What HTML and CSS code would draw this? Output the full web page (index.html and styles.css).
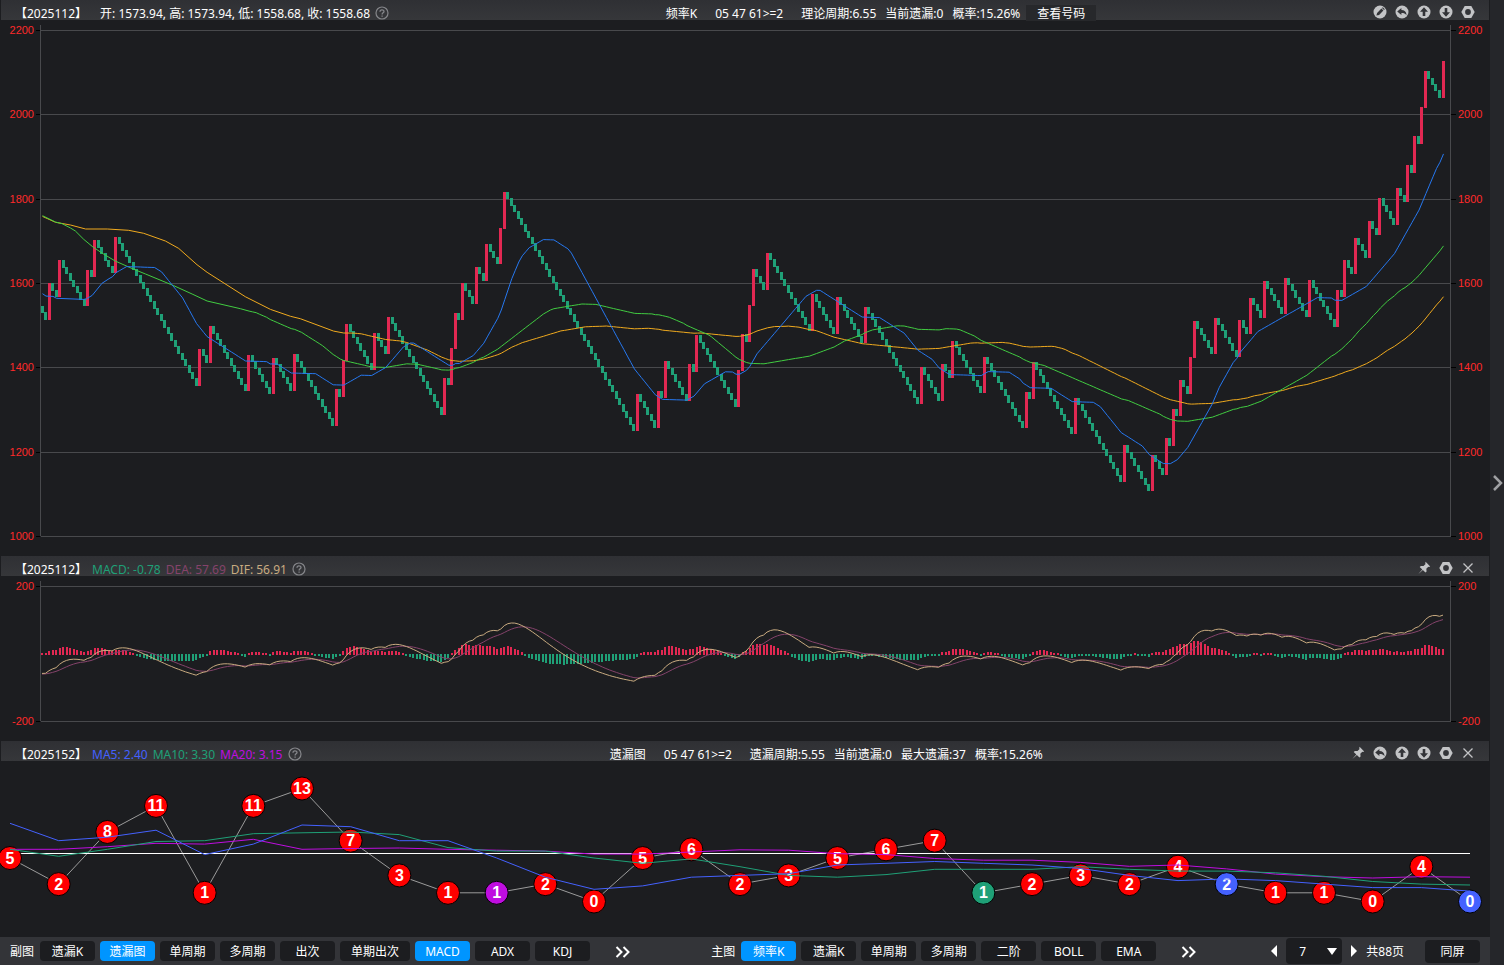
FILE: index.html
```html
<!DOCTYPE html>
<html lang="zh-CN">
<head>
  <meta charset="UTF-8">
  <title>频率K</title>
  <link rel="stylesheet" href="styles.css">
</head>
<body>

<svg class="defs" width="0" height="0">
  <symbol id="i-edit" viewBox="0 0 14 14">
    <circle cx="7" cy="7" r="6.5" fill="#c3c4c6"/>
    <path d="M3.4 10.6l.7-2.7 4.3-4.3 2 2-4.3 4.3zM9 3l.8-.7 2 2-.8.7z" fill="#333438"/>
  </symbol>
  <symbol id="i-back" viewBox="0 0 14 14">
    <circle cx="7" cy="7" r="6.5" fill="#c3c4c6"/>
    <path d="M2.2 6.5L6.4 3v2.1c3 0 4.9 1.7 5.2 5.1C10.4 8.6 8.9 8 6.4 8v2z" fill="#333438"/>
  </symbol>
  <symbol id="i-up" viewBox="0 0 14 14">
    <circle cx="7" cy="7" r="6.5" fill="#c3c4c6"/>
    <path d="M7 2.3L11 6.7H8.3V11H5.7V6.7H3z" fill="#333438"/>
  </symbol>
  <symbol id="i-down" viewBox="0 0 14 14">
    <circle cx="7" cy="7" r="6.5" fill="#c3c4c6"/>
    <path d="M7 11.7L11 7.3H8.3V3H5.7V7.3H3z" fill="#333438"/>
  </symbol>
  <symbol id="i-set" viewBox="0 0 14 14">
    <path d="M3.7 1h6.6L13.7 7l-3.4 6H3.7L.3 7z" fill="#c3c4c6"/>
    <circle cx="7" cy="7" r="2.9" fill="#333438"/>
  </symbol>
  <symbol id="i-pin" viewBox="0 0 14 14">
    <path d="M8.600.8l4.600 4.600-1.200.5-.7-.2-2 2.100.3 2.700-1.200 1.100-2.500-2.500-4.600 4 4-4.700L2.700 6l1.200-1.100 2.600.2 2.100-2-.4-.9z" fill="#c3c4c6"/>
  </symbol>
  <symbol id="i-close" viewBox="0 0 14 14">
    <path d="M2.500 2.500l9 9M11.500 2.500l-9 9" stroke="#c3c4c6" stroke-width="1.300" fill="none"/>
  </symbol>
  <symbol id="i-help" viewBox="0 0 14 14">
    <circle cx="7" cy="7" r="6" fill="none" stroke="#85868a" stroke-width="1.200"/>
    <path d="M5 5.700C5 3.200 9 3.300 9 5.500c0 1.300-1.900 1.400-1.900 2.900M7.100 9.500v1.300" fill="none" stroke="#85868a" stroke-width="1.300"/>
  </symbol>
  <symbol id="i-more" viewBox="0 0 16 12">
    <path d="M1.500 1L6.500 6l-5 5M8.500 1l5 5-5 5" fill="none" stroke="#fff" stroke-width="2"/>
  </symbol>
</svg>

<main class="content">
  <section class="panel panel-main">
    <header class="panel-head">
      <div class="info">
        <span class="issue issue-wide">【2025112】</span>
        <span>开: 1573.94, 高: 1573.94, 低: 1558.68, 收: 1558.68</span>
        <button class="icon help" aria-label="帮助"><svg><use href="#i-help"/></svg></button>
      </div>
      <div class="summary">
        <span class="wide">频率K</span>
        <span class="wide">05 47 61&gt;=2</span>
        <span>理论周期:6.55</span>
        <span>当前遗漏:0</span>
        <span>概率:15.26%</span>
        <button class="view-code">查看号码</button>
      </div>
      <div class="tools">
        <button class="icon" aria-label="编辑"><svg><use href="#i-edit"/></svg></button>
        <button class="icon" aria-label="返回"><svg><use href="#i-back"/></svg></button>
        <button class="icon" aria-label="上移"><svg><use href="#i-up"/></svg></button>
        <button class="icon" aria-label="下移"><svg><use href="#i-down"/></svg></button>
        <button class="icon" aria-label="设置"><svg><use href="#i-set"/></svg></button>
      </div>
    </header>
    <div class="chart"><svg id="kChart"></svg></div>
  </section>

  <section class="panel panel-macd">
    <header class="panel-head">
      <div class="info">
        <span class="issue">【2025112】</span>
        <span class="c-green">MACD: -0.78</span>
        <span class="c-plum">DEA: 57.69</span>
        <span class="c-sand">DIF: 56.91</span>
        <button class="icon help" aria-label="帮助"><svg><use href="#i-help"/></svg></button>
      </div>
      <div class="tools">
        <button class="icon" aria-label="固定"><svg><use href="#i-pin"/></svg></button>
        <button class="icon" aria-label="设置"><svg><use href="#i-set"/></svg></button>
        <button class="icon" aria-label="关闭"><svg><use href="#i-close"/></svg></button>
      </div>
    </header>
    <div class="chart"><svg id="macdChart"></svg></div>
  </section>

  <section class="panel panel-miss">
    <header class="panel-head">
      <div class="info">
        <span class="issue">【2025152】</span>
        <span class="c-blue">MA5: 2.40</span>
        <span class="c-green">MA10: 3.30</span>
        <span class="c-magenta">MA20: 3.15</span>
        <button class="icon help" aria-label="帮助"><svg><use href="#i-help"/></svg></button>
      </div>
      <div class="summary">
        <span class="wide">遗漏图</span>
        <span class="wide">05 47 61&gt;=2</span>
        <span>遗漏周期:5.55</span>
        <span>当前遗漏:0</span>
        <span>最大遗漏:37</span>
        <span>概率:15.26%</span>
      </div>
      <div class="tools">
        <button class="icon" aria-label="固定"><svg><use href="#i-pin"/></svg></button>
        <button class="icon" aria-label="返回"><svg><use href="#i-back"/></svg></button>
        <button class="icon" aria-label="上移"><svg><use href="#i-up"/></svg></button>
        <button class="icon" aria-label="下移"><svg><use href="#i-down"/></svg></button>
        <button class="icon" aria-label="设置"><svg><use href="#i-set"/></svg></button>
        <button class="icon" aria-label="关闭"><svg><use href="#i-close"/></svg></button>
      </div>
    </header>
    <div class="chart"><svg id="missChart"></svg></div>
  </section>

  <footer class="bottom-bar">
    <div class="group">
      <span class="group-name">副图</span>
      <button class="tab">遗漏K</button>
      <button class="tab active">遗漏图</button>
      <button class="tab">单周期</button>
      <button class="tab">多周期</button>
      <button class="tab">出次</button>
      <button class="tab tab-long">单期出次</button>
      <button class="tab active">MACD</button>
      <button class="tab">ADX</button>
      <button class="tab">KDJ</button>
      <button class="more" aria-label="更多副图"><svg><use href="#i-more"/></svg></button>
    </div>
    <div class="group group-right">
      <span class="group-name">主图</span>
      <button class="tab active">频率K</button>
      <button class="tab">遗漏K</button>
      <button class="tab">单周期</button>
      <button class="tab">多周期</button>
      <button class="tab">二阶</button>
      <button class="tab">BOLL</button>
      <button class="tab">EMA</button>
      <button class="more" aria-label="更多主图"><svg><use href="#i-more"/></svg></button>
    </div>
    <div class="pager">
      <button class="arrow" aria-label="上一页"><svg viewBox="0 0 8 14"><path d="M7 1v12L1 7z"/></svg></button>
      <div class="page-box">
        <select aria-label="页码"><option>7</option></select>
      </div>
      <button class="arrow" aria-label="下一页"><svg viewBox="0 0 8 14"><path d="M1 1v12l6-6z"/></svg></button>
      <span class="total">共88页</span>
      <button class="tab same-screen">同屏</button>
    </div>
  </footer>
</main>

<aside class="side-bar">
  <button aria-label="展开"><svg viewBox="0 0 12 16"><path d="M2 1l7 7-7 7"/></svg></button>
</aside>

<script src="chart.js"></script>
</body>
</html>
```

FILE: styles.css
```css
* {
  box-sizing: border-box;
}
body {
  margin: 0;
  height: 100vh;
  display: flex;
  overflow: hidden;
  background: #1c1d20;
  color: #fff;
  font-family: "Noto Sans", "Noto Sans CJK SC", sans-serif;
  font-size: 12px;
  line-height: 16px;
}
button, select {
  margin: 0;
  padding: 0;
  border: none;
  background: none;
  color: inherit;
  font: inherit;
  cursor: pointer;
}
.defs {
  position: absolute;
}
.content {
  flex: 1;
  min-width: 0;
  display: flex;
  flex-direction: column;
}

/* 面板 */
.panel {
  display: flex;
  flex-direction: column;
  min-height: 0;
}
.panel-main {
  flex: 556 1 0;
}
.panel-macd {
  flex: 185 1 0;
}
.panel-miss {
  flex: 196 1 0;
}
.panel-head {
  flex: none;
  height: 20px;
  margin: 0 1px;
  padding: 0 14px;
  display: flex;
  justify-content: space-between;
  background: linear-gradient(#2f3034, #36373a);
  white-space: nowrap;
}
.info, .summary {
  display: flex;
  padding-top: 6px;
}
.info {
  gap: 5px;
}
.issue-wide {
  margin-right: 8px;
}
.summary {
  gap: 9px;
}
.summary .wide {
  margin-right: 9px;
}
.view-code {
  height: 16px;
  width: 70px;
  margin: -1px 0 0 -3px;
  padding-top: 2px;
  line-height: 14px;
  background: #27282b;
}
.tools {
  display: flex;
  gap: 8px;
  padding-top: 5px;
}
.icon, .icon svg {
  display: block;
  width: 14px;
  height: 14px;
}
.c-green {
  color: #1fa077;
}
.c-plum {
  color: #85436b;
}
.c-sand {
  color: #c9ab80;
}
.c-blue {
  color: #4461ff;
}
.c-magenta {
  color: #bf0de0;
}

/* 图表 */
.chart {
  flex: 1;
  min-height: 0;
}
.chart svg {
  display: block;
  width: 100%;
  height: 100%;
}
.grid {
  stroke: #48494c;
  shape-rendering: crispEdges;
}
.tick {
  stroke: #000;
  shape-rendering: crispEdges;
}
.axis-text {
  fill: #ff2a2a;
  font: 11px "Liberation Sans", sans-serif;
}
.end {
  text-anchor: end;
}
.up, .down {
  shape-rendering: crispEdges;
}
.up {
  fill: #e22852;
}
.down {
  fill: #1fa077;
}
.line {
  fill: none;
  stroke-width: 1;
}
.ma20 {
  stroke: #2678f0;
}
.ma60 {
  stroke: #41cc41;
}
.ma90 {
  stroke: #f0aa1e;
}
.dif {
  stroke: #c9ab80;
}
.dea {
  stroke: #85436b;
}
.s5 {
  stroke: #4461ff;
}
.s10 {
  stroke: #1fa077;
}
.s20 {
  stroke: #bf0de0;
}
.link {
  stroke: #9b9b9b;
}
.average {
  stroke: #fff;
  shape-rendering: crispEdges;
}
.ball {
  fill: #f00;
  stroke: #000;
}
.ball-magenta {
  fill: #bf0de0;
}
.ball-green {
  fill: #1fa077;
}
.ball-blue {
  fill: #4461ff;
}
.ball-text {
  fill: #fff;
  font: bold 16px "Liberation Sans", sans-serif;
  text-anchor: middle;
}

/* 底部工具栏 */
.bottom-bar {
  flex: none;
  height: 28px;
  padding: 0 10px;
  display: flex;
  align-items: center;
  background: #333438;
  white-space: nowrap;
}
.group, .pager {
  display: flex;
  align-items: center;
}
.group {
  gap: 5px;
}
.group-name, .total {
  padding-top: 2px;
}
.group-name {
  width: 25px;
}
.group-right {
  margin-left: auto;
}
.tab {
  width: 55px;
  height: 20px;
  padding-top: 2px;
  border-radius: 4px;
  background: #1c1d20;
}
.tab:hover {
  background: #26272b;
}
.tab-long {
  width: 70px;
}
.tab.active {
  background: #0095ff;
}
.more {
  width: 55px;
  height: 20px;
}
.more svg {
  display: block;
  width: 16px;
  height: 12px;
  margin: 2px auto 0;
}
.pager {
  margin-left: 54px;
}
.arrow {
  width: 8px;
  height: 14px;
}
.arrow svg {
  display: block;
  width: 8px;
  height: 14px;
  fill: #fff;
}
.page-box {
  position: relative;
  width: 56px;
  height: 26px;
  margin: 0 8px;
  border-radius: 4px;
  background: #1c1d20;
}
.page-box select {
  width: 100%;
  height: 100%;
  padding: 2px 0 0 13px;
  appearance: none;
}
.page-box::after {
  content: "";
  position: absolute;
  right: 5px;
  top: 10px;
  border: 5px solid transparent;
  border-top: 7px solid #fff;
  border-bottom: none;
  pointer-events: none;
}
.total {
  margin: 0 21px 0 8px;
}
.same-screen {
  height: 23px;
}

.side-bar {
  flex: none;
  width: 14px;
  display: flex;
  align-items: center;
  background: #25262a;
}
.side-bar svg {
  display: block;
  width: 12px;
  height: 16px;
  margin-left: 2px;
  fill: none;
  stroke: #a0a1a4;
  stroke-width: 2.5;
}
```

FILE: chart.js
```js
// 每期未中下跌 15.26，命中上涨 84.74
const MISS = 15.26;
const TOTAL = 401;
const START = 1545.4;
const hits = new Set([
  2, 5, 13, 15, 21, 45, 48, 59, 66, 72, 84, 86, 87, 95, 99, 115, 117, 118, 120, 124,
  127, 131, 132, 170, 176, 178, 185, 187, 199, 200, 202, 203, 207, 220, 227, 235,
  251, 257, 260, 269, 281, 283, 295, 309, 317, 321, 323, 325, 328, 329, 335, 342,
  345, 349, 355, 362, 370, 372, 375, 379, 382, 387, 390, 392, 394, 395, 400
]);

const candles = [];
let price = START;
for (let i = 0; i < TOTAL; i++) {
  const open = price;
  price += hits.has(i) ? 100 - MISS : -MISS;
  candles.push({ open, close: price });
}
const closes = candles.map(c => c.close);

// 均线开头部分 [序号, 值]
const lead20 = [[0, 1574.7], [1, 1569], [3, 1568.3], [4, 1563.6], [11.8, 1561.2], [12.6, 1562.8], [14.2, 1570.7], [17, 1599.2]];
const lead60 = [[0, 1759.6], [3.7, 1744.6], [5.6, 1740.7], [8, 1730.4], [9.4, 1723.3], [11.8, 1703.5], [14.2, 1686.9],
  [17, 1671], [20.8, 1652], [26.1, 1632.4], [29.4, 1621.3], [37.5, 1593.6], [42.7, 1573.9], [47, 1557.3], [56.5, 1539.1]];
const lead90 = [[0, 1758], [3.7, 1743.9], [8, 1737.5], [12.3, 1728], [18.5, 1728], [24.6, 1725], [28.9, 1717.8],
  [35.1, 1699.6], [38.9, 1682], [44.1, 1643.4], [47, 1625.3], [57.9, 1567.6], [65.1, 1537.5], [70.8, 1521],
  [73.6, 1515.4], [83.1, 1486], [86, 1481.4]];

function average(values, n, lead) {
  const points = lead.slice();
  for (let i = n - 1; i < values.length; i++) {
    let sum = 0;
    for (let j = i - n + 1; j <= i; j++) sum += values[j];
    points.push([i, sum / n]);
  }
  return points;
}

// MACD
const macd = [];
let ema12 = 1565, ema26 = 1624, dea = -61;
closes.forEach((c, i) => {
  if (i > 0) {
    ema12 += (c - ema12) * 2 / 13;
    ema26 += (c - ema26) * 2 / 27;
    dea += (ema12 - ema26 - dea) * 2 / 10;
  }
  macd.push({ dif: ema12 - ema26, dea });
});

const misses = [5, 2, 8, 11, 1, 11, 13, 7, 3, 1, 1, 2, 0, 5, 6, 2, 3, 5, 6, 7, 1, 2, 3, 2, 4, 2, 1, 1, 0, 4, 0];
const ballColors = { 10: 'ball-magenta', 20: 'ball-green', 25: 'ball-blue', 30: 'ball-blue' };
const missLead5 = [[0, 9], [1, 7], [2, 7.4], [3, 8.2]];
const missLead10 = [6, 5.2, 6, 6.9, 7, 7.8, 7.9, 8, 7.7].map((v, i) => [i, v]);
const missLead20 = [6, 6, 6.3, 6.7, 6.6, 7.15, 6, 6.1, 6.15, 6, 5.9, 5.8, 5.45, 5.45, 5.7, 5.95, 5.9, 5.5, 5.4].map((v, i) => [i, v]);

function line(x1, y1, x2, y2, cls) {
  return `<line x1="${x1}" y1="${y1}" x2="${x2}" y2="${y2}" class="${cls}"/>`;
}

function polyline(points, x, y, cls) {
  const list = points.map(p => x(p[0]).toFixed(1) + ',' + y(p[1]).toFixed(1)).join(' ');
  return `<polyline points="${list}" class="line ${cls}"/>`;
}

// 左右坐标轴和横线
function axes(w, h, values, y) {
  const left = 40.5, right = w - 39.5;
  let out = '';
  values.forEach(v => {
    const py = Math.round(y(v)) + 0.5;
    out += line(left, py, right, py, 'grid');
    out += line(36, py, 40, py, 'tick') + line(right + 0.5, py, right + 5, py, 'tick');
    out += `<text x="34" y="${py + 3.5}" class="axis-text end">${v}</text>`;
    out += `<text x="${w - 32}" y="${py + 3.5}" class="axis-text">${v}</text>`;
  });
  out += line(left, 5, left, h - 20, 'grid') + line(right, 5, right, h - 20, 'grid');
  return out;
}

function drawK() {
  const svg = document.getElementById('kChart');
  const w = svg.clientWidth, h = svg.clientHeight;
  const x = i => 42 + i * (w - 89) / (TOTAL - 1);
  const y = v => 10 + (2200 - v) * (h - 30) / 1200;
  let out = axes(w, h, [2200, 2000, 1800, 1600, 1400, 1200, 1000], y);
  candles.forEach((c, i) => {
    const top = Math.round(y(Math.max(c.open, c.close)));
    const bottom = Math.round(y(Math.min(c.open, c.close)));
    const cls = c.close > c.open ? 'up' : 'down';
    out += `<rect x="${Math.round(x(i) - 1.5)}" y="${top}" width="3" height="${bottom - top + 1}" class="${cls}"/>`;
  });
  const lx = i => x(i) + 0.5;
  out += polyline(average(closes, 90, lead90), lx, y, 'ma90');
  out += polyline(average(closes, 60, lead60), lx, y, 'ma60');
  out += polyline(average(closes, 20, lead20), lx, y, 'ma20');
  svg.innerHTML = out;
}

function drawMacd() {
  const svg = document.getElementById('macdChart');
  const w = svg.clientWidth, h = svg.clientHeight;
  const x = i => 42 + i * (w - 89) / (TOTAL - 1);
  const y = v => 10 + (200 - v) * (h - 30) / 400;
  const zero = Math.round(y(0));
  let out = axes(w, h, [200, -200], y);
  macd.forEach((m, i) => {
    const size = Math.ceil(Math.abs(y(m.dif - m.dea) - y(0))) + 1;
    const up = m.dif > m.dea;
    out += `<rect x="${Math.round(x(i) - 1)}" y="${up ? zero + 1 - size : zero}" width="2" height="${size}" class="${up ? 'up' : 'down'}"/>`;
  });
  out += polyline(macd.map((m, i) => [i, m.dea]), x, y, 'dea');
  out += polyline(macd.map((m, i) => [i, m.dif]), x, y, 'dif');
  svg.innerHTML = out;
}

function drawMiss() {
  const svg = document.getElementById('missChart');
  const w = svg.clientWidth, h = svg.clientHeight;
  const x = i => 10 + i * (w - 30) / (misses.length - 1);
  const y = v => 27.5 + (13 - v) * (h - 63) / 13;
  let out = polyline(misses.map((v, i) => [i, v]), x, y, 'link');
  const avg = Math.floor(y(5.55)) + 0.5;
  out += line(x(0), avg, x(misses.length - 1), avg, 'average');
  misses.forEach((v, i) => {
    out += `<circle cx="${x(i)}" cy="${y(v)}" r="11.5" class="ball ${ballColors[i] || ''}"/>`;
    out += `<text x="${x(i)}" y="${y(v) + 5.5}" class="ball-text">${v}</text>`;
  });
  out += polyline(average(misses, 20, missLead20), x, y, 's20');
  out += polyline(average(misses, 10, missLead10), x, y, 's10');
  out += polyline(average(misses, 5, missLead5), x, y, 's5');
  svg.innerHTML = out;
}

function draw() {
  drawK();
  drawMacd();
  drawMiss();
}

draw();
window.addEventListener('resize', draw);
```
